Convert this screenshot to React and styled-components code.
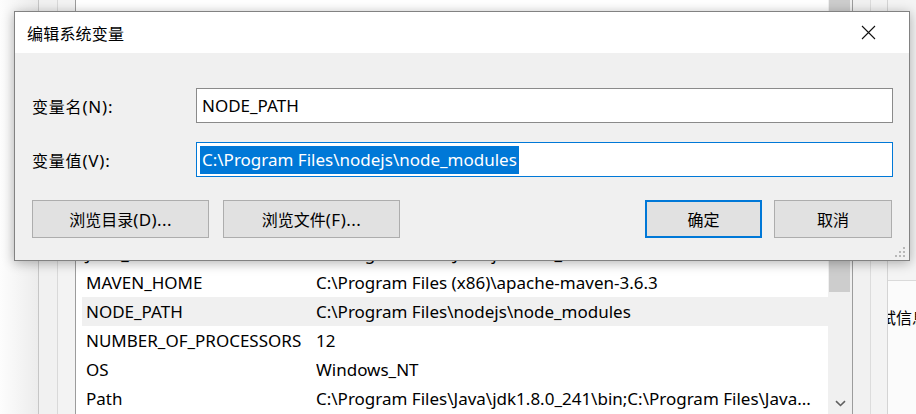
import React from "react";
import styled, { createGlobalStyle } from "styled-components";

const FONT = `"Noto Sans", "Noto Sans CJK SC", sans-serif`;

const Global = createGlobalStyle`
  html, body { margin: 0; padding: 0; background: #fff; }
  body { font-family: ${FONT}; overflow: hidden; color: #000; }
  * { box-sizing: border-box; }
`;

const Screen = styled.div`
  position: relative;
  width: 916px;
  height: 414px;
  overflow: hidden;
  background: #fff;
  font-family: ${FONT};
`;

/* ---------- background window ---------- */
const Backdrop = styled.div`
  display: flex;
  width: 100%;
  height: 100%;
`;

const Strip = styled.div`
  flex: 0 0 ${(p) => p.$w}px;
  background: ${(p) => p.$bg};
  border-right: 1px solid ${(p) => p.$line};
`;

const ListPane = styled.div`
  flex: 0 0 778px;
  display: flex;
  border-left: 1px solid #9c9c9c;
  border-right: 1px solid #9c9c9c;
  background: #fff;
`;

const List = styled.div`
  flex: 1;
  padding-top: 7px;
  overflow: hidden;
`;

const Row = styled.div`
  display: flex;
  height: 29px;
  margin-left: 6px;
  padding-left: 4px;
  align-items: center;
  font-size: 17px;
  white-space: nowrap;
  background: ${(p) => (p.$selected ? "#f0f0f0" : "transparent")};
`;

const NameCell = styled.span`
  flex: 0 0 230px;
`;

const ValueCell = styled.span`
  flex: 1;
  overflow: hidden;
`;

const ScrollBar = styled.div`
  flex: 0 0 24px;
  display: flex;
  flex-direction: column;
  background: #f0f0f0;
`;

const Thumb = styled.div`
  height: 292px;
  margin: 0 2px 0 1px;
  background: #cdcdcd;
`;

const Track = styled.div`
  flex: 1;
`;

const ArrowBox = styled.div`
  height: 20px;
  display: flex;
  align-items: center;
  justify-content: center;
  padding-bottom: 1px;
`;

const SidePanel = styled.div`
  flex: 1;
  display: flex;
  flex-direction: column;
  box-shadow: inset 6px 0 6px -4px rgba(0, 0, 0, 0.12);
`;

const SideTop = styled.div`
  height: 281px;
  background: #f4f4f4;
  border-bottom: 1px solid #dadada;
`;

const SideBottom = styled.div`
  flex: 1;
  overflow: hidden;
  background: #fbfbfb;
`;

const SideText = styled.div`
  margin-top: 27px;
  font-size: 16px;
  line-height: 20px;
  white-space: nowrap;
  text-indent: -24px;
`;

/* ---------- dialog ---------- */
const Dialog = styled.div`
  position: absolute;
  left: 14px;
  top: 11px;
  width: 896px;
  height: 250px;
  display: flex;
  flex-direction: column;
  border: 1px solid #828282;
  background: #f0f0f0;
  box-shadow: 0 2px 11px rgba(0, 0, 0, 0.3);
`;

const TitleBar = styled.div`
  height: 41px;
  flex: 0 0 41px;
  display: flex;
  align-items: center;
  justify-content: space-between;
  padding-left: 12px;
  background: #fff;
`;

const Title = styled.span`
  font-size: 16px;
  letter-spacing: 0.2px;
`;

const CloseButton = styled.div`
  width: 30px;
  height: 30px;
  margin-right: 26px;
  display: flex;
  align-items: center;
  justify-content: center;
`;

const Body = styled.div`
  position: relative;
  flex: 1;
  display: flex;
  flex-direction: column;
  gap: 19px;
  padding: 35px 16px 0 17px;
`;

const FieldRow = styled.div`
  display: flex;
  align-items: center;
  height: 35px;
`;

const Label = styled.span`
  flex: 0 0 164px;
  font-size: 16px;
  letter-spacing: 0.8px;
`;

const Hotkey = styled.span`
  font-size: 17px;
  letter-spacing: ${(p) => (p.$wide ? 0.8 : 0.4)}px;
`;

const TextBox = styled.div`
  flex: 1;
  height: 35px;
  display: flex;
  align-items: center;
  padding-left: 3px;
  background: #fff;
  border: 1px solid ${(p) => (p.$focused ? "#0078d7" : "#8a8a8a")};
  font-size: 17px;
  white-space: nowrap;
`;

const Value = styled.span`
  display: inline-block;
  padding: 0 2px;
  line-height: 28px;
  background: ${(p) => (p.$selected ? "#0078d7" : "transparent")};
  color: ${(p) => (p.$selected ? "#fff" : "#000")};
`;

const ButtonRow = styled.div`
  display: flex;
  justify-content: space-between;
  margin-top: 4px;
  padding-right: 1px;
`;

const ButtonGroup = styled.div`
  display: flex;
  gap: ${(p) => p.$gap}px;
`;

const Button = styled.div`
  width: ${(p) => p.$w}px;
  height: 38px;
  display: flex;
  align-items: center;
  justify-content: center;
  background: #e1e1e1;
  border: ${(p) => (p.$primary ? "2px solid #0078d7" : "1px solid #adadad")};
  font-size: 16px;
  white-space: nowrap;
`;

const Grip = styled.div`
  position: absolute;
  right: 3px;
  bottom: 2px;
  width: 11px;
  height: 11px;
  display: flex;
`;

const hiddenRows = [
  ["CATALINA_HOME", "C:\\apache-tomcat-9.0.30"],
  ["CLASSPATH", ".;%JAVA_HOME%\\lib;%JAVA_HOME%\\lib\\tools.jar"],
  ["ComSpec", "C:\\Windows\\system32\\cmd.exe"],
  ["DriverData", "C:\\Windows\\System32\\Drivers\\DriverData"],
  ["ERLANG_HOME", "C:\\Program Files\\erl10.6"],
  ["GOPATH", "C:\\Users\\Administrator\\go"],
  ["GRADLE_HOME", "C:\\gradle-6.3"],
  ["HADOOP_HOME", "C:\\hadoop-3.1.3"],
];

const rows = [
  ...hiddenRows,
  ["JAVA_HOME", "C:\\Program Files\\Java\\jdk1.8.0_241"],
  ["MAVEN_HOME", "C:\\Program Files (x86)\\apache-maven-3.6.3"],
  ["NODE_PATH", "C:\\Program Files\\nodejs\\node_modules", true],
  ["NUMBER_OF_PROCESSORS", "12"],
  ["OS", "Windows_NT"],
  ["Path", "C:\\Program Files\\Java\\jdk1.8.0_241\\bin;C:\\Program Files\\Java..."],
];

export default function App() {
  return (
    <>
      <Global />
      <Screen>
        <Backdrop>
          <Strip $w={39} $bg="linear-gradient(to right, #fdfdfd, #ececec)" $line="#c6c6c6" />
          <Strip $w={19} $bg="#f1f1f1" $line="#d9d9d9" />
          <Strip $w={17} $bg="#f3f3f3" $line="#f3f3f3" />
          <ListPane>
            <List>
              {rows.map(([name, value, sel]) => (
                <Row key={name} $selected={sel}>
                  <NameCell>{name}</NameCell>
                  <ValueCell>{value}</ValueCell>
                </Row>
              ))}
            </List>
            <ScrollBar>
              <Thumb />
              <Track />
              <ArrowBox>
                <svg width="11" height="7" viewBox="0 0 11 7">
                  <path d="M1 1.2 L5.5 5.5 L10 1.2" fill="none" stroke="#606060" strokeWidth="1.6" />
                </svg>
              </ArrowBox>
            </ScrollBar>
          </ListPane>
          <Strip $w={18} $bg="#f1f1f1" $line="#dcdcdc" />
          <Strip $w={17} $bg="#f3f3f3" $line="#d4d4d4" />
          <SidePanel>
            <SideTop />
            <SideBottom>
              <SideText>调试信息</SideText>
            </SideBottom>
          </SidePanel>
        </Backdrop>

        <Dialog>
          <TitleBar>
            <Title>编辑系统变量</Title>
            <CloseButton>
              <svg width="15" height="15" viewBox="0 0 15 15">
                <path d="M1 1 L14 14 M14 1 L1 14" stroke="#111" strokeWidth="1.1" fill="none" />
              </svg>
            </CloseButton>
          </TitleBar>
          <Body>
            <FieldRow>
              <Label>
                变量名<Hotkey $wide>(N):</Hotkey>
              </Label>
              <TextBox>
                <Value>NODE_PATH</Value>
              </TextBox>
            </FieldRow>
            <FieldRow>
              <Label>
                变量值<Hotkey $wide>(V):</Hotkey>
              </Label>
              <TextBox $focused>
                <Value $selected>C:\Program Files\nodejs\node_modules</Value>
              </TextBox>
            </FieldRow>
            <ButtonRow>
              <ButtonGroup $gap={14}>
                <Button $w={177}>
                  浏览目录<Hotkey>(D)...</Hotkey>
                </Button>
                <Button $w={177}>
                  浏览文件<Hotkey>(F)...</Hotkey>
                </Button>
              </ButtonGroup>
              <ButtonGroup $gap={12}>
                <Button $w={117} $primary>确定</Button>
                <Button $w={118}>取消</Button>
              </ButtonGroup>
            </ButtonRow>
            <Grip>
              <svg width="11" height="11" viewBox="0 0 11 11">
                <g fill="#b8b8b8">
                  <rect x="8" y="0" width="2" height="2" />
                  <rect x="4" y="4" width="2" height="2" />
                  <rect x="8" y="4" width="2" height="2" />
                  <rect x="0" y="8" width="2" height="2" />
                  <rect x="4" y="8" width="2" height="2" />
                  <rect x="8" y="8" width="2" height="2" />
                </g>
              </svg>
            </Grip>
          </Body>
        </Dialog>
      </Screen>
    </>
  );
}
